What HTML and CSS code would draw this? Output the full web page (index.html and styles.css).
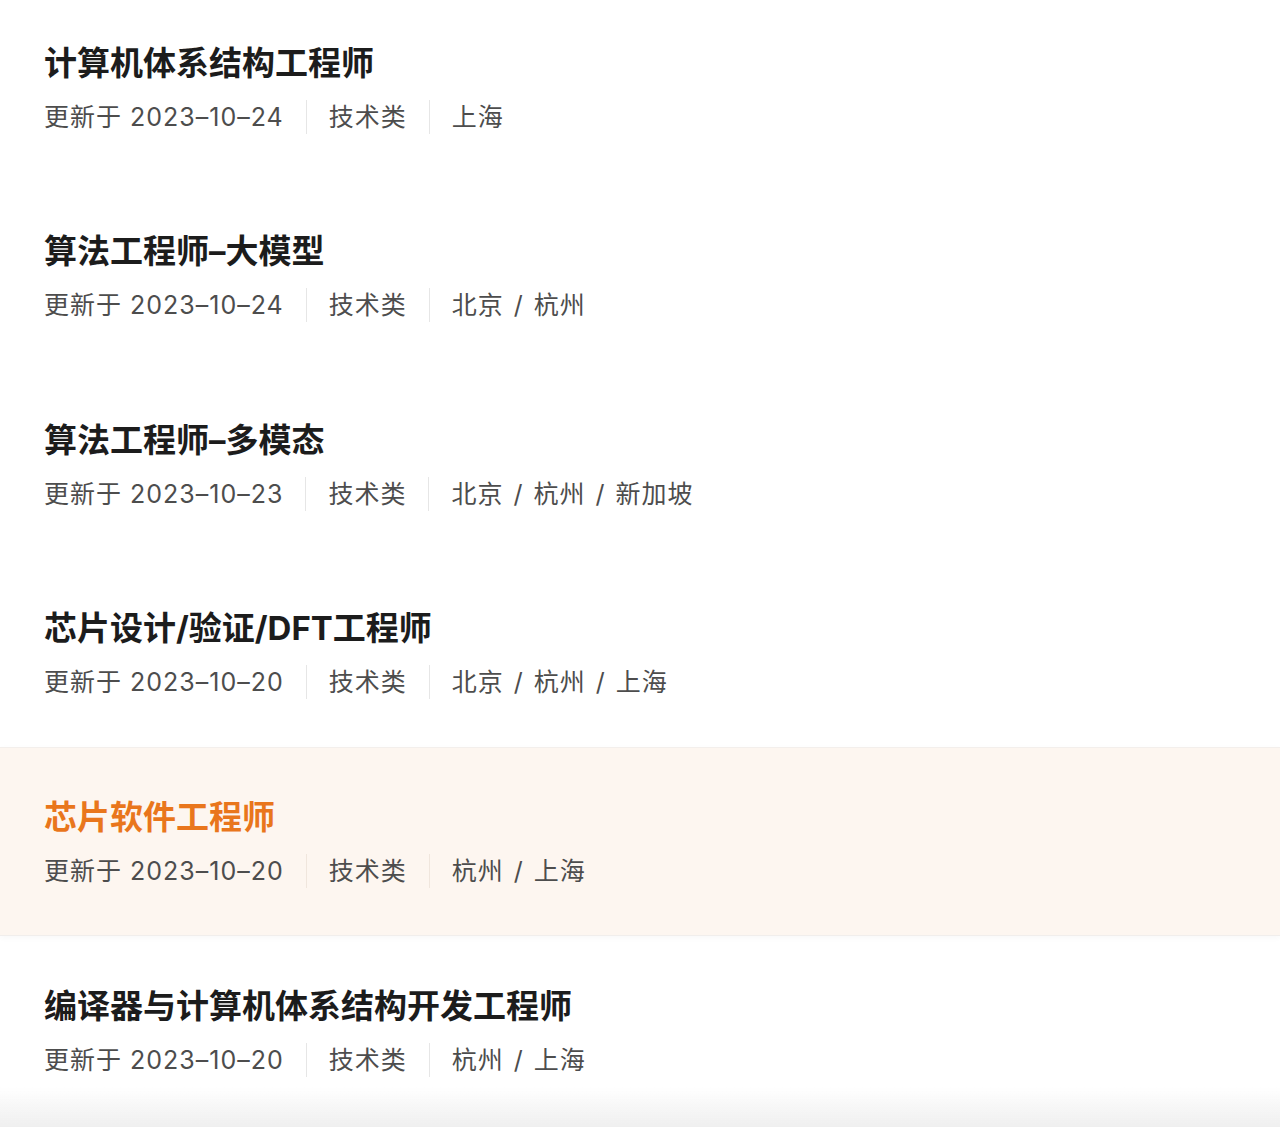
FILE: index.html
```html
<!DOCTYPE html>
<html lang="zh-CN">
<head>
<meta charset="utf-8">
<title>职位列表</title>
<link rel="stylesheet" href="styles.css">
</head>
<body>
<ul class="job-list">
  <li class="job">
    <h2 class="job-title">计算机体系结构工程师</h2>
    <div class="job-meta"><span>更新于 2023–10–24</span><i class="sep"></i><span>技术类</span><i class="sep"></i><span class="loc">上海</span></div>
  </li>
  <li class="job">
    <h2 class="job-title">算法工程师–大模型</h2>
    <div class="job-meta"><span>更新于 2023–10–24</span><i class="sep"></i><span>技术类</span><i class="sep"></i><span class="loc">北京 / 杭州</span></div>
  </li>
  <li class="job">
    <h2 class="job-title">算法工程师–多模态</h2>
    <div class="job-meta"><span>更新于 2023–10–23</span><i class="sep"></i><span>技术类</span><i class="sep"></i><span class="loc">北京 / 杭州 / 新加坡</span></div>
  </li>
  <li class="job">
    <h2 class="job-title">芯片设计/验证/DFT工程师</h2>
    <div class="job-meta"><span>更新于 2023–10–20</span><i class="sep"></i><span>技术类</span><i class="sep"></i><span class="loc">北京 / 杭州 / 上海</span></div>
  </li>
  <li class="job job-active">
    <h2 class="job-title">芯片软件工程师</h2>
    <div class="job-meta"><span>更新于 2023–10–20</span><i class="sep"></i><span>技术类</span><i class="sep"></i><span class="loc">杭州 / 上海</span></div>
  </li>
  <li class="job">
    <h2 class="job-title">编译器与计算机体系结构开发工程师</h2>
    <div class="job-meta"><span>更新于 2023–10–20</span><i class="sep"></i><span>技术类</span><i class="sep"></i><span class="loc">杭州 / 上海</span></div>
  </li>
</ul>
<div class="bottom-fade"></div>
</body>
</html>
```

FILE: styles.css
```css
* { box-sizing: border-box; }
html, body {
  margin: 0;
  padding: 0;
  background: #ffffff;
  overflow: hidden;
}
body {
  font-family: Inter, "Noto Sans CJK SC", sans-serif;
  color: #1a1a1a;
}
.job-list {
  list-style: none;
  margin: -7.4px 0 0;
  padding: 0;
}
.job {
  padding: 49px 44px 0;
  height: 188.6px;
  border-top: 1px solid transparent;
  border-bottom: 1px solid transparent;
}
.job-title {
  margin: 0;
  font-size: 33px;
  line-height: 40px;
  font-weight: 700;
  color: #1c1c1c;
}
.job-meta {
  display: flex;
  align-items: center;
  margin-top: 16px;
  font-size: 25px;
  line-height: 36px;
  letter-spacing: 1px;
  color: #4d4d4d;
}
.job-meta span {
  white-space: pre;
}
.job-meta .loc {
  word-spacing: 2px;
}
.sep {
  display: block;
  width: 1px;
  height: 34px;
  margin: 0 22px 0 22px;
  background: #e6e6e6;
}
.job-active {
  background: #fdf6f0;
  border-top-color: #f3efec;
  border-bottom-color: #f1eeec;
  box-shadow: 0 2px 6px rgba(0, 0, 0, 0.03);
}
.job-active .job-title {
  color: #e9761c;
}
.job-active .sep {
  background: #f0e6dd;
}
.bottom-fade {
  position: fixed;
  left: 0;
  right: 0;
  bottom: 0;
  height: 40px;
  background: linear-gradient(to bottom, rgba(240, 240, 240, 0), #efefef);
  pointer-events: none;
}
```
